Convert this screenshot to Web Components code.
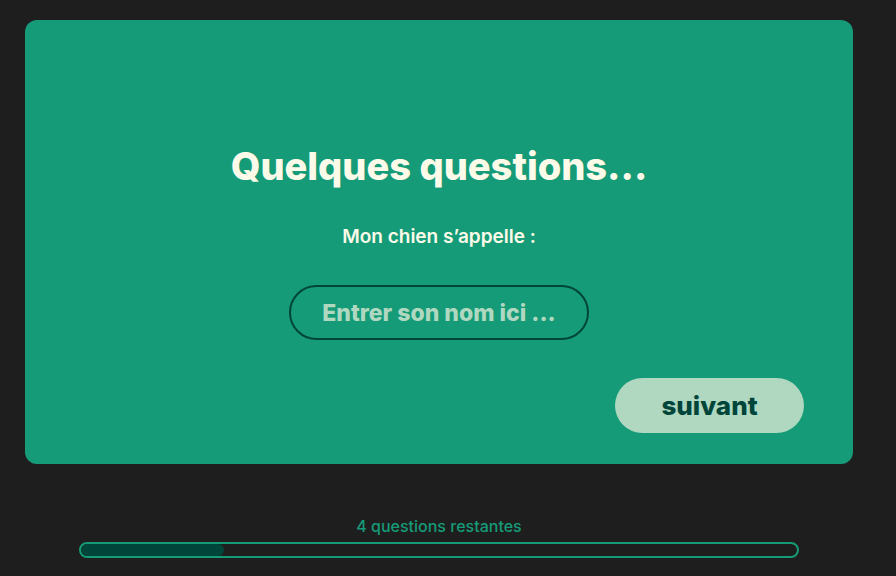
<!DOCTYPE html>
<html lang="fr">
<head>
<meta charset="utf-8">
<meta name="viewport" content="width=device-width, initial-scale=1">
<title>Quelques questions</title>
<style>
  :root {
    --night: #1e1e1e;
    --green: #169b78;
    --deep: #00453a;
    --mint: #b0d8c1;
    --cream: #fcfae8;
    --display: Inter, "DejaVu Sans", sans-serif;
    --text: Inter, "Open Sans", sans-serif;
  }
  body { margin: 0; background: var(--night); font-family: var(--text); }
</style>
</head>
<body>
<quiz-page>
  <question-card heading="Quelques questions..." action="suivant">
    <name-field label="Mon chien s’appelle :" hint="Entrer son nom ici ..."></name-field>
  </question-card>
  <quiz-progress slot="footer" value="20">4 questions restantes</quiz-progress>
</quiz-page>
<script>
  class Base extends HTMLElement {
    connectedCallback() {
      if (!this.shadowRoot) this.attachShadow({ mode: "open" }).innerHTML = this.render();
    }
  }

  customElements.define("quiz-page", class extends Base {
    render() {
      return `<style>
        :host { display: block; padding: 20px 43px 18px 25px; }
        main { display: flex; flex-direction: column; gap: 52px; }
        footer { padding: 0 54px; }
      </style>
      <main><slot></slot><footer><slot name="footer"></slot></footer></main>`;
    }
  });

  customElements.define("question-card", class extends Base {
    render() {
      return `<style>
        :host { display: block; background: var(--green); border-radius: 12px; padding: 122px 49px 31px; }
        form { display: flex; flex-direction: column; align-items: center; margin: 0; }
        h1 { margin: 0 0 33px; font: 800 38px/48px var(--display); color: var(--cream); text-align: center; }
        button { align-self: flex-end; margin-top: 38px; border: 0; border-radius: 28px; padding: 0;
          width: 189px; height: 55px; background: var(--mint); color: var(--deep);
          font: 800 26px/32px var(--display); cursor: pointer; }
      </style>
      <form>
        <h1>${this.getAttribute("heading")}</h1>
        <slot></slot>
        <button type="button">${this.getAttribute("action")}</button>
      </form>`;
    }
  });

  customElements.define("name-field", class extends Base {
    render() {
      return `<style>
        :host { display: flex; flex-direction: column; align-items: center; gap: 34px; }
        label { font: 600 19px/28px var(--text); color: var(--cream); }
        input { box-sizing: border-box; width: 300px; max-width: 100%; height: 55px; padding: 0 16px;
          border: 2px solid var(--deep); border-radius: 28px; background: none; outline: 0;
          color: var(--cream); font: 800 23px/28px var(--display); text-align: center; }
        input::placeholder { color: var(--mint); opacity: 1; }
      </style>
      <label for="name">${this.getAttribute("label")}</label>
      <input id="name" type="text" placeholder="${this.getAttribute("hint")}">`;
    }
  });

  customElements.define("quiz-progress", class extends Base {
    render() {
      return `<style>
        :host { display: flex; flex-direction: column; gap: 6px; }
        label { font: 500 16px/20px var(--text); color: var(--green); text-align: center; }
        progress { appearance: none; -webkit-appearance: none; display: block; box-sizing: border-box;
          width: 100%; height: 16px; border: 2px solid var(--green); border-radius: 8px; overflow: hidden; background: none; }
        progress::-webkit-progress-bar { background: none; }
        progress::-webkit-progress-value { background: var(--deep); border-radius: 6px; }
      </style>
      <label for="bar"><slot></slot></label>
      <progress id="bar" max="100" value="${this.getAttribute("value")}"></progress>`;
    }
  });
</script>
</body>
</html>
